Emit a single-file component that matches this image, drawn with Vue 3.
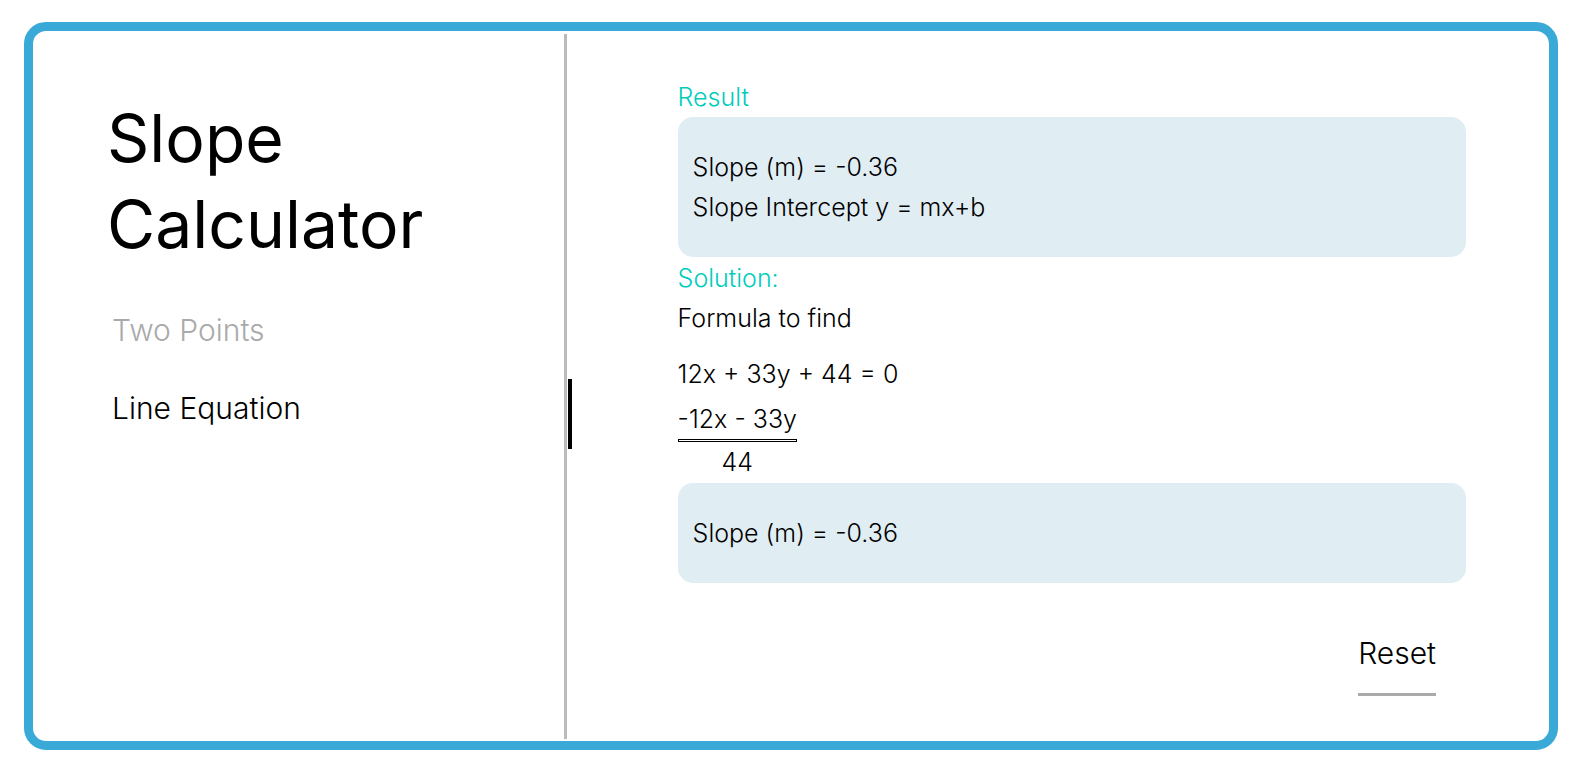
<script setup>
import { ref } from 'vue'

const modes = ['Two Points', 'Line Equation']
const active = ref('Line Equation')
const results = ['Slope (m) = -0.36', 'Slope Intercept y = mx+b']
</script>

<template>
  <main class="calculator">
    <aside class="sidebar">
      <h1>Slope<br />Calculator</h1>
      <nav class="modes" aria-label="Calculation mode">
        <button
          v-for="mode in modes"
          :key="mode"
          type="button"
          class="mode"
          :class="{ active: mode === active }"
          @click="active = mode"
        >
          {{ mode }}
        </button>
      </nav>
    </aside>
    <section class="content">
      <h2>Result</h2>
      <div class="panel">
        <p v-for="line in results" :key="line">{{ line }}</p>
      </div>
      <h2>Solution:</h2>
      <p>Formula to find</p>
      <p class="equation">12x + 33y + 44 = 0</p>
      <div class="fraction">
        <p>-12x - 33y</p>
        <div class="bar"></div>
        <p>44</p>
      </div>
      <div class="panel">
        <p>{{ results[0] }}</p>
      </div>
      <button type="button" class="reset">Reset</button>
    </section>
  </main>
</template>

<style>
body {
  margin: 0;
  background: #fff;
}
</style>

<style scoped>
.calculator {
  box-sizing: border-box;
  display: flex;
  min-height: calc(100vh - 43px);
  margin: 22px 25px 21px 24px;
  padding: 3px 0 2px;
  border: 9px solid #39a9d8;
  border-radius: 22px;
  color: #000;
  font-family: Inter, "Liberation Sans", sans-serif;
  font-weight: 350;
  font-size: 25px;
  line-height: 40px;
}

h1,
h2,
p {
  margin: 0;
  font-weight: inherit;
}

.sidebar {
  flex: 0 0 35%;
  padding-top: 61px;
  border-right: 3px solid #bbb;
}

h1 {
  padding-left: 74px;
  font-size: 66px;
  font-weight: 400;
  line-height: 86px;
}

.modes {
  display: flex;
  flex-direction: column;
  gap: 8px;
  margin: 34px -8px 0 0;
}

.mode {
  height: 70px;
  padding: 0 0 12px 79px;
  border: 0;
  border-right: 4px solid transparent;
  background: none;
  color: #aaa;
  font: inherit;
  font-size: 30px;
  line-height: 58px;
  text-align: left;
  cursor: pointer;
}

.mode.active {
  border-right-color: #000;
  color: #000;
}

.content {
  display: flex;
  flex: 1;
  flex-direction: column;
  align-items: flex-start;
  padding: 43px 83px 40px 111px;
}

h2 {
  color: #0cb;
  font-size: inherit;
}

.panel {
  box-sizing: border-box;
  width: 100%;
  padding: 30px 15px;
  border-radius: 15px;
  background: #e0edf3;
}

.panel + h2 {
  margin-top: 1px;
}

.equation {
  margin: 16px 0 5px;
}

.fraction {
  margin-bottom: 1px;
  text-align: center;
}

.bar {
  height: 1px;
  border: 1px solid #000;
}

.reset {
  align-self: flex-end;
  margin: 40px 30px 0 0;
  padding: 0 0 10px;
  border: 0;
  border-bottom: 3px solid #aaa;
  background: none;
  color: #000;
  font: inherit;
  font-size: 30px;
  line-height: 60px;
  cursor: pointer;
}
</style>
